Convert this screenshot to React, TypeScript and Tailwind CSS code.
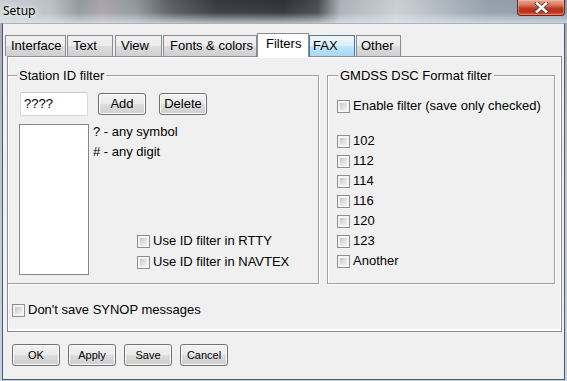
import React from "react";

function Check({ label, className = "" }: { label: string; className?: string }) {
  return (
    <div className={"h-[16px] flex items-center gap-[3px] leading-[16px] " + className}>
      <span className="w-[13px] h-[13px] shrink-0 border border-[#8e8f8f] bg-[#f4f4f4] p-[2px] flex">
        <span className="flex-1 bg-[linear-gradient(135deg,#c3c6ca_0%,#dcdee0_50%,#f3f3f3_100%)]" />
      </span>
      <span className="whitespace-nowrap">{label}</span>
    </div>
  );
}

function Btn({ label, className = "" }: { label: string; className?: string }) {
  return (
    <div
      className={
        "h-[22px] w-[48px] rounded-[3px] border border-[#707070] bg-[linear-gradient(to_bottom,#f2f2f2_0%,#ebebeb_50%,#dddddd_51%,#cfcfcf_100%)] shadow-[inset_0_0_0_1px_#fcfcfc] flex items-center justify-center " +
        className
      }
    >
      {label}
    </div>
  );
}

const inactiveTab =
  "h-[21px] border border-b-0 border-[#898c95] bg-[linear-gradient(to_bottom,#f2f2f2_0%,#ebebeb_50%,#dddddd_51%,#cfcfcf_100%)] flex items-center leading-[16px] whitespace-nowrap ";

export default function App() {
  return (
    <div className="w-[567px] h-[381px] overflow-hidden bg-[linear-gradient(to_bottom,#9ea7b1_0%,#b9c3cd_40%,#c3d3e4_100%)] font-['Liberation_Sans',Arial,sans-serif] text-[13px] text-black">
      {/* Title bar */}
      <div className="h-[23px] flex justify-between items-start bg-[linear-gradient(to_bottom,rgba(255,255,255,0.05)_0%,rgba(255,255,255,0.1)_55%,rgba(225,232,240,0.75)_100%),linear-gradient(to_right,#c9cdd1_0%,#b7bcc1_9%,#8c9299_14%,#a39ea4_18%,#8a9098_24%,#505459_30%,#2c2f33_38%,#24272b_50%,#3c4045_56%,#a4acb4_60%,#c6ccd2_70%,#aab3bc_78%,#8e9aa6_86%,#8594a3_100%)]">
        <div className="h-[21px] flex items-center pl-[3px] font-['Noto_Sans',sans-serif] text-[12px] [text-shadow:0_0_5px_#ffffff,0_0_8px_#ffffff]">
          Setup
        </div>
        <div className="mr-[2px] w-[48px] h-[16px] rounded-b-[4px] border border-t-0 border-[#5a2a22] bg-[linear-gradient(to_bottom,#e9a794_0%,#d7755e_35%,#c0391f_55%,#b5301a_75%,#d5573a_100%)] shadow-[inset_0_0_0_1px_rgba(255,200,180,0.45)] flex items-center justify-center">
          <svg width="15" height="11" viewBox="0 0 15 11">
            <path d="M3 1.5 L12 9.5 M12 1.5 L3 9.5" stroke="#5b4b48" strokeWidth="4.2" strokeLinecap="square" />
            <path d="M3 1.5 L12 9.5 M12 1.5 L3 9.5" stroke="#ffffff" strokeWidth="2.4" strokeLinecap="square" />
          </svg>
        </div>
      </div>

      {/* Client area */}
      <div className="ml-[2px] w-[563px] h-[357px] border border-[#4f5862] border-t-[#a9b1b9] bg-[#f0f0f0] flex flex-col">
        {/* Tabs */}
        <div className="mt-[9px] h-[23px] flex items-end">
          <div className={inactiveTab + "ml-[2px] w-[61px] pl-[5px]"}>Interface</div>
          <div className={inactiveTab + "ml-[1px] w-[46px] pl-[5px]"}>Text</div>
          <div className={inactiveTab + "ml-[2px] w-[47px] pl-[5px]"}>View</div>
          <div className={inactiveTab + "ml-[1px] w-[94px] pl-[6px]"}>Fonts &amp; colors</div>
          <div className="relative z-10 -mb-px h-[24px] w-[52px] border border-b-0 border-[#898c95] bg-white pl-[8px] pt-[2px] leading-[16px]">
            Filters
          </div>
          <div className="h-[21px] w-[46px] border border-b-0 border-[#3c7fb1] bg-[linear-gradient(to_bottom,#eaf6fd_0%,#d9f0fc_50%,#bee6fd_51%,#a7d9f5_100%)] flex items-center pl-[3px] leading-[16px]">
            FAX
          </div>
          <div className={inactiveTab + "ml-[1px] w-[45px] pl-[4px]"}>Other</div>
        </div>

        {/* Tab panel */}
        <div className="ml-[4px] w-[555px] h-[276px] border border-[#898c95] bg-[#f0f0f0] shadow-[inset_1px_1px_0_#ffffff,inset_-1px_-2px_0_#ffffff] flex flex-col">
          <div className="mt-[18px] flex">
            {/* Station ID filter */}
            <div className="relative w-[311px] h-[209px] border-t border-r border-b border-[#a0a0a0] shadow-[inset_0_1px_0_#ffffff,1px_1px_0_#ffffff] flex flex-col">
              <span className="absolute left-[9px] top-[-8px] px-[2px] h-[16px] leading-[16px] bg-[#f0f0f0]">
                Station ID filter
              </span>
              <div className="mt-[16px] pl-[12px] flex items-center">
                <div className="w-[68px] h-[24px] rounded-[2px] border border-[#d5d9de] border-t-[#c5c9ce] bg-white flex items-center pl-[3px]">
                  ????
                </div>
                <Btn label="Add" className="ml-[10px]" />
                <Btn label="Delete" className="ml-[13px]" />
              </div>
              <div className="mt-[8px] pl-[11px] flex">
                <div className="w-[70px] h-[151px] border border-[#828790] bg-white" />
                <div className="ml-[4px] flex flex-col">
                  <div className="h-[16px] leading-[16px]">? - any symbol</div>
                  <div className="mt-[4px] h-[16px] leading-[16px]">
                    # - any digit
                  </div>
                  <Check label="Use ID filter in RTTY" className="mt-[73px] ml-[44px]" />
                  <Check label="Use ID filter in NAVTEX" className="mt-[5px] ml-[44px]" />
                </div>
              </div>
            </div>

            {/* GMDSS */}
            <div className="relative ml-[8px] w-[228px] h-[209px] border border-[#a0a0a0] shadow-[inset_1px_1px_0_#ffffff,1px_1px_0_#ffffff] flex flex-col pl-[9px]">
              <span className="absolute left-[10px] top-[-8px] px-[2px] h-[16px] leading-[16px] bg-[#f0f0f0]">
                GMDSS DSC Format filter
              </span>
              <Check label="Enable filter (save only checked)" className="mt-[22px]" />
              <Check label="102" className="mt-[19px]" />
              <Check label="112" className="mt-[4px]" />
              <Check label="114" className="mt-[4px]" />
              <Check label="116" className="mt-[4px]" />
              <Check label="120" className="mt-[4px]" />
              <Check label="123" className="mt-[4px]" />
              <Check label="Another" className="mt-[4px]" />
            </div>
          </div>

          <Check label="Don't save SYNOP messages" className="mt-[18px] ml-[4px]" />
        </div>

        {/* Buttons */}
        <div className="mt-[12px] pl-[9px] flex gap-[8px] text-[11px]">
          <Btn label="OK" />
          <Btn label="Apply" />
          <Btn label="Save" />
          <Btn label="Cancel" />
        </div>
      </div>
    </div>
  );
}
